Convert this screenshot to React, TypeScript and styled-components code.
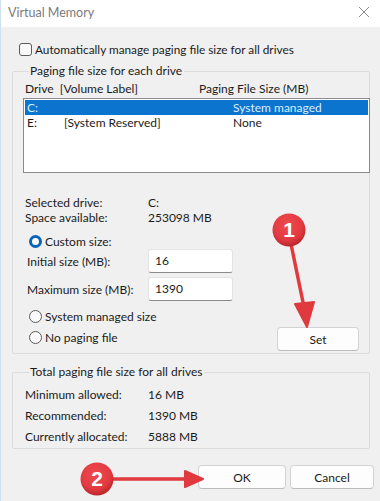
import React from "react";
import styled, { createGlobalStyle } from "styled-components";

const Global = createGlobalStyle`
  html, body { margin: 0; padding: 0; }
  body { width: 380px; height: 501px; overflow: hidden; background: #f0f0f0; }
  * { box-sizing: border-box; }
`;

const Window = styled.div`
  position: relative;
  width: 380px;
  height: 501px;
  display: flex;
  flex-direction: column;
  font-family: "Lato", "Noto Sans", sans-serif;
  font-size: 12px;
  color: #1b1b1b;
  border-left: 1px solid #cfe0ee;
  background: #f0f0f0;
`;

const TitleBar = styled.div`
  height: 27px;
  flex: none;
  background: #ffffff;
  display: flex;
  align-items: center;
  justify-content: space-between;
  padding: 0 8px 3px 7px;
  color: #7b7b7b;
  font-size: 12.5px;
`;

const CloseIcon = styled.svg`
  width: 12px;
  height: 12px;
  margin-right: 2px;
`;

const Body = styled.div`
  flex: 1;
  display: flex;
  flex-direction: column;
  padding: 15px 10px 0 11px;
`;

const CheckRow = styled.label`
  display: flex;
  align-items: center;
  gap: 3px;
  height: 14px;
  padding-left: 7px;
  font-size: 11.8px;
`;

const CheckBox = styled.span`
  width: 13px;
  height: 13px;
  border: 1px solid #5c5c5c;
  border-radius: 3px;
  background: #fafafa;
`;

const Group = styled.fieldset<{ $h: number; $top: number }>`
  margin: ${(p) => p.$top}px 0 0 0;
  padding: 0 0 0 10px;
  height: ${(p) => p.$h}px;
  border: 1px solid #dcdcdc;
  border-radius: 2px;
  display: flex;
  flex-direction: column;
  min-width: 0;
`;

const Legend = styled.legend`
  padding: 0 2px 0 1px;
  margin-left: 6px;
  line-height: 14px;
`;

const HeaderRow = styled.div`
  display: grid;
  grid-template-columns: 174px 1fr;
  padding-left: 2px;
  margin-top: 3px;
  height: 15px;
  line-height: 15px;
`;

const ListBox = styled.div`
  margin-top: 2px;
  height: 75px;
  background: #ffffff;
  border: 1px solid #8b8b8b;
  margin-right: -1px;
  padding: 1px;
`;

const ListRow = styled.div<{ $sel?: boolean }>`
  display: grid;
  grid-template-columns: 37px 169px 1fr;
  height: 15px;
  line-height: 15px;
  padding-left: 2px;
  background: ${(p) => (p.$sel ? "#0a74cf" : "transparent")};
  color: ${(p) => (p.$sel ? "#dbeeff" : "#1b1b1b")};
`;

const InfoRow = styled.div<{ $top?: number; $h?: number }>`
  display: grid;
  grid-template-columns: 123px 1fr;
  padding-left: 2px;
  margin-top: ${(p) => p.$top ?? 0}px;
  height: ${(p) => p.$h ?? 15}px;
  line-height: ${(p) => p.$h ?? 15}px;
`;

const Lower = styled.div`
  display: grid;
  grid-template-columns: 1fr 82px;
  padding-right: 10px;
  margin-top: 9px;
`;

const LeftCol = styled.div`
  display: flex;
  flex-direction: column;
`;

const RadioRow = styled.label<{ $top?: number }>`
  display: flex;
  align-items: center;
  gap: 3px;
  height: 14px;
  margin-top: ${(p) => p.$top ?? 0}px;
  padding-left: 6px;
`;

const Radio = styled.span<{ $on?: boolean }>`
  width: 13px;
  height: 13px;
  border-radius: 50%;
  background: ${(p) => (p.$on ? "#ffffff" : "#fafafa")};
  border: ${(p) => (p.$on ? "3.5px solid #0a63b8" : "1px solid #5a5a5a")};
`;

const FieldRow = styled.div<{ $top?: number }>`
  display: grid;
  grid-template-columns: 121px 85px;
  align-items: center;
  padding-left: 4px;
  margin-top: ${(p) => p.$top ?? 0}px;
  height: 24px;
`;

const Input = styled.div`
  height: 24px;
  background: #ffffff;
  border: 1px solid #e3e3e3;
  border-bottom: 1px solid #8a8a8a;
  border-radius: 3px;
  padding: 3px 0 0 6px;
`;

const Button = styled.button<{ $w: number }>`
  width: ${(p) => p.$w}px;
  height: 24px;
  font-family: inherit;
  font-size: 12px;
  color: #1b1b1b;
  background: #fdfdfd;
  border: 1px solid #d3d3d3;
  border-bottom-color: #bdbdbd;
  border-radius: 4px;
  padding: 0;
`;

const SetWrap = styled.div`
  display: flex;
  align-items: flex-end;
  margin-bottom: -7px;
`;

const Footer = styled.div`
  display: flex;
  justify-content: flex-end;
  gap: 4px;
  margin-top: 16px;
  margin-right: -4px;
`;

const Overlay = styled.svg`
  position: absolute;
  left: 0;
  top: 0;
  width: 380px;
  height: 501px;
  pointer-events: none;
`;

const Badge = ({ cx, cy, n }: { cx: number; cy: number; n: string }) => (
  <g>
    <circle cx={cx} cy={cy} r={16.5} fill="url(#badgeGrad)" />
    <text
      x={cx}
      y={cy + 7}
      textAnchor="middle"
      fontFamily="Liberation Sans, Arial, sans-serif"
      fontWeight="bold"
      fontSize="21"
      fill="#ffffff"
    >
      {n}
    </text>
  </g>
);

export default function App() {
  return (
    <>
      <Global />
      <Window>
        <TitleBar>
          <span>Virtual Memory</span>
          <CloseIcon viewBox="0 0 12 12">
            <path d="M1 1 L11 11 M11 1 L1 11" stroke="#8a8a8a" strokeWidth="1" fill="none" />
          </CloseIcon>
        </TitleBar>
        <Body>
          <CheckRow>
            <CheckBox />
            <span>Automatically manage paging file size for all drives</span>
          </CheckRow>
          <Group $h={290} $top={8}>
            <Legend>Paging file size for each drive</Legend>
            <HeaderRow>
              <span>Drive&nbsp;&nbsp;[Volume Label]</span>
              <span>Paging File Size (MB)</span>
            </HeaderRow>
            <ListBox>
              <ListRow $sel>
                <span>C:</span>
                <span></span>
                <span>System managed</span>
              </ListRow>
              <ListRow>
                <span>E:</span>
                <span>[System Reserved]</span>
                <span>None</span>
              </ListRow>
            </ListBox>
            <InfoRow $top={22}>
              <span>Selected drive:</span>
              <span>C:</span>
            </InfoRow>
            <InfoRow>
              <span>Space available:</span>
              <span>253098 MB</span>
            </InfoRow>
            <Lower>
              <LeftCol>
                <RadioRow>
                  <Radio $on />
                  <span>Custom size:</span>
                </RadioRow>
                <FieldRow $top={1}>
                  <span>Initial size (MB):</span>
                  <Input>16</Input>
                </FieldRow>
                <FieldRow $top={4}>
                  <span>Maximum size (MB):</span>
                  <Input>1390</Input>
                </FieldRow>
                <RadioRow $top={8}>
                  <Radio />
                  <span>System managed size</span>
                </RadioRow>
                <RadioRow $top={7}>
                  <Radio />
                  <span>No paging file</span>
                </RadioRow>
              </LeftCol>
              <SetWrap>
                <Button $w={82} type="button">Set</Button>
              </SetWrap>
            </Lower>
          </Group>
          <Group $h={84} $top={11}>
            <Legend>Total paging file size for all drives</Legend>
            <InfoRow $top={5} $h={21}>
              <span>Minimum allowed:</span>
              <span>16 MB</span>
            </InfoRow>
            <InfoRow $h={21}>
              <span>Recommended:</span>
              <span>1390 MB</span>
            </InfoRow>
            <InfoRow $h={21}>
              <span>Currently allocated:</span>
              <span>5888 MB</span>
            </InfoRow>
          </Group>
          <Footer>
            <Button $w={88} type="button">OK</Button>
            <Button $w={84} type="button">Cancel</Button>
          </Footer>
        </Body>
        <Overlay viewBox="0 0 380 501">
          <defs>
            <radialGradient id="badgeGrad" cx="45%" cy="35%" r="65%">
              <stop offset="0%" stopColor="#ef4a4f" />
              <stop offset="70%" stopColor="#e23a40" />
              <stop offset="100%" stopColor="#b8262b" />
            </radialGradient>
          </defs>
          <line x1="290" y1="244" x2="304" y2="312" stroke="#e0393e" strokeWidth="3.5" strokeLinecap="round" />
          <path d="M294 304 L306 327 L313 302 Z" fill="#e0393e" stroke="#e0393e" strokeWidth="2" strokeLinejoin="round" />
          <Badge cx={288} cy={230} n="1" />
          <line x1="110" y1="479" x2="190" y2="479" stroke="#e0393e" strokeWidth="3.5" strokeLinecap="round" />
          <path d="M184 471 L202 479 L184 487 Z" fill="#e0393e" stroke="#e0393e" strokeWidth="2" strokeLinejoin="round" />
          <Badge cx={96} cy={479} n="2" />
        </Overlay>
      </Window>
    </>
  );
}
